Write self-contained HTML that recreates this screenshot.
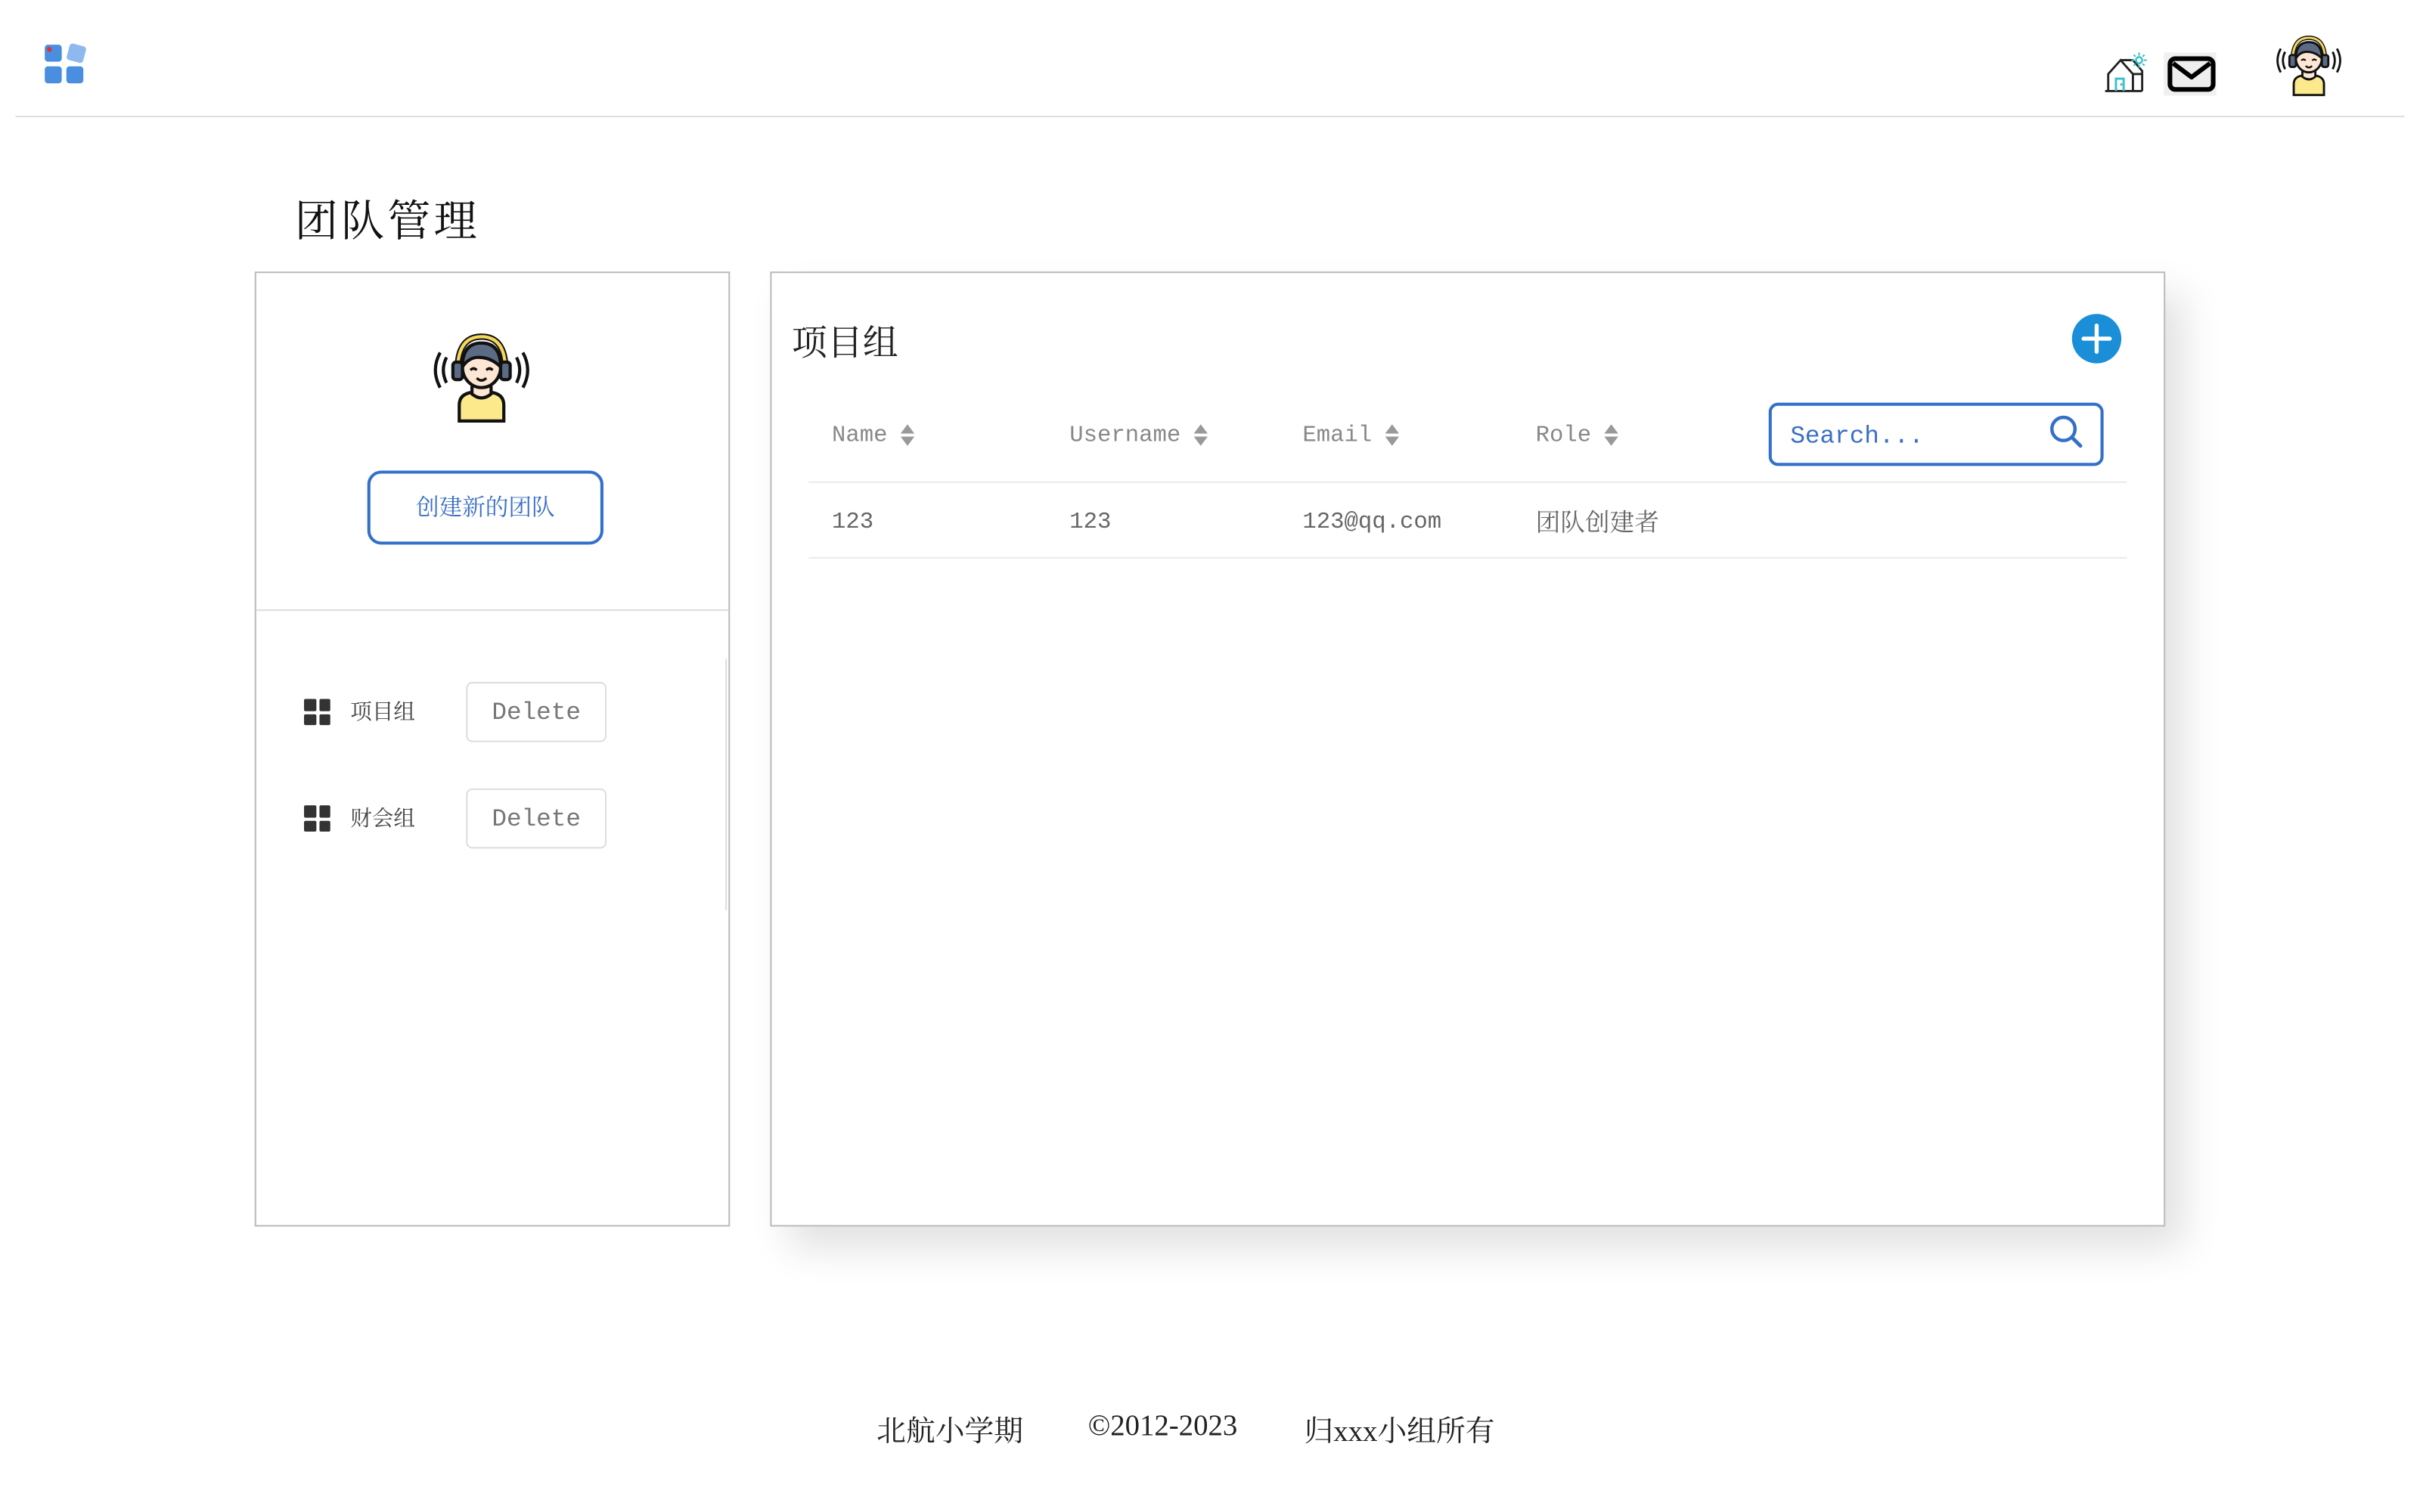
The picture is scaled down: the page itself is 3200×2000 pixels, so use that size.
<!DOCTYPE html>
<html><head><meta charset="utf-8"><style>
html,body{margin:0;padding:0;background:#fff;width:3200px;height:2000px;overflow:hidden}
#w{position:absolute;left:0;top:0;width:1568px;height:980px;transform:scale(2.0408);transform-origin:0 0;font-family:"Liberation Serif","Noto Serif CJK SC",serif;color:#333}
.a{position:absolute}
.mono{font-family:"Liberation Mono","Noto Serif CJK SC",monospace}
.th{position:absolute;top:274px;font-size:15px;color:#888;white-space:nowrap}
.td{position:absolute;top:330px;font-size:15px;color:#666;white-space:nowrap}
.sort{display:inline-block;vertical-align:middle;margin-left:8px;width:10px;height:16px}
.del{position:absolute;left:302px;width:89px;height:37px;border:1px solid #ddd;border-radius:4px;font-size:16px;color:#777;text-align:center;line-height:39px}
.grid{position:absolute;left:197px;width:17px;height:17px}
.grid i{position:absolute;width:7.5px;height:7.5px;background:#333;border-radius:1px}
.it{position:absolute;left:227px;font-size:14px;color:#444}
.ft{position:absolute;top:913px;font-size:19px;color:#222;white-space:nowrap}
</style></head><body><div id="w">
<svg width="0" height="0" style="position:absolute"><defs>
<symbol id="av" viewBox="0 0 64 60">
<path d="M18 58 v-10 q0-7 8-8 h12 q8 1 8 8 v10z" fill="#fbe98c" stroke="#111" stroke-width="2"/>
<path d="M26 36 v5 q6 5 12 0 v-5" fill="#fde7d4" stroke="#111" stroke-width="2"/>
<ellipse cx="32" cy="24" rx="12" ry="13" fill="#fde7d4" stroke="#111" stroke-width="2"/>
<path d="M20 24 q0-15 12-15 q12 0 12 15 q-6-6-14-6 q-6 0-10 6z" fill="#5c6b85" stroke="#111" stroke-width="2"/>
<path d="M17 26 q0-21 15-21 q15 0 15 21" fill="none" stroke="#111" stroke-width="4"/>
<path d="M17 26 q0-21 15-21 q15 0 15 21" fill="none" stroke="#f5d85a" stroke-width="2"/>
<rect x="14" y="21" width="6" height="11" rx="2" fill="#5c6b85" stroke="#111" stroke-width="2"/>
<rect x="44" y="21" width="6" height="11" rx="2" fill="#5c6b85" stroke="#111" stroke-width="2"/>
<path d="M25 26 q2-2 4 0 M35 26 q2-2 4 0 M29 31 q3 3 6 0" fill="none" stroke="#111" stroke-width="1.6"/>
<path d="M10 18 q-4 8 0 16 M6 15 q-6 11 0 22 M54 18 q4 8 0 16 M58 15 q6 11 0 22" fill="none" stroke="#111" stroke-width="2"/>
</symbol>
<symbol id="sa" viewBox="0 0 10 16"><path d="M5 1 L9.5 7 H0.5Z M5 15 L9.5 9 H0.5Z" fill="#999"/></symbol>
</defs></svg>

<svg class="a" style="left:28px;top:27px" width="30" height="30" viewBox="0 0 30 30">
<rect x="1" y="2" width="11" height="11" rx="2" fill="#4a8ee0"/><circle cx="4" cy="5" r="1.6" fill="#d33"/>
<rect x="16" y="2" width="11" height="11" rx="2" fill="#8db8f0" transform="rotate(15 21.5 7.5)"/>
<rect x="1" y="16" width="11" height="11" rx="2" fill="#4a8ee0"/>
<rect x="15" y="16" width="11" height="11" rx="2" fill="#4a8ee0"/>
</svg>
<div class="a" style="left:10px;top:75px;width:1548px;height:1px;background:#ddd"></div>
<svg class="a" style="left:1362px;top:33px" width="30" height="28" viewBox="0 0 30 28">
<path d="M2 26 H26 M4 26 V15 L12 6 L20 15 V26 M12 6 H20 L26 13 V26 M20 15 H26" fill="none" stroke="#222" stroke-width="1.4"/>
<path d="M9 26 V18 H14 V26 M12.5 21v1.5" fill="none" stroke="#3bbfc8" stroke-width="1.4"/>
<circle cx="24" cy="6" r="2" fill="none" stroke="#3bbfc8" stroke-width="1.2"/>
<path d="M24 1v2 M24 9v2 M19 6h2 M27 6h2 M20.5 2.5l1.2 1.2 M26.3 8.3l1.2 1.2 M27.5 2.5l-1.2 1.2 M21.7 8.3l-1.2 1.2" stroke="#3bbfc8" stroke-width="1"/>
</svg>
<div class="a" style="left:1402px;top:34px;width:34px;height:28px;background:#f0f0f0"></div>
<svg class="a" style="left:1404px;top:36px" width="32" height="24" viewBox="0 0 32 24">
<rect x="2" y="2" width="28" height="20" rx="3.5" fill="#eee" stroke="#000" stroke-width="3"/>
<path d="M4 5 L16 14 L28 5" fill="none" stroke="#000" stroke-width="3" stroke-linejoin="round"/>
</svg>
<svg class="a" style="left:1469px;top:21px" width="54" height="42"><use href="#av" width="54" height="42"/></svg>

<div class="a" style="left:191px;top:122px;font-size:28px;color:#111;font-family:'Noto Serif CJK SC',serif;letter-spacing:2px">团队管理</div>

<div class="a" style="left:165px;top:176px;width:306px;height:617px;border:1.5px solid #bbb"></div>
<svg class="a" style="left:279px;top:213px" width="66" height="62"><use href="#av" width="66" height="62"/></svg>
<div class="a" style="left:238px;top:305px;width:149px;height:44px;border:2px solid #3470c8;border-radius:9px;color:#3a6fc4;font-size:15px;text-align:center;line-height:44px;font-family:'Noto Serif CJK SC',serif">创建新的团队</div>
<div class="a" style="left:166px;top:395px;width:306px;height:1px;background:#ddd"></div>
<div class="a" style="left:470px;top:427px;width:1px;height:163px;background:#ddd"></div>
<div class="grid" style="top:453px"><i style="left:0;top:0"></i><i style="left:9.5px;top:0"></i><i style="left:0;top:9.5px"></i><i style="left:9.5px;top:9.5px"></i></div>
<div class="it" style="top:451px">项目组</div>
<div class="del mono" style="top:442px">Delete</div>
<div class="grid" style="top:522px"><i style="left:0;top:0"></i><i style="left:9.5px;top:0"></i><i style="left:0;top:9.5px"></i><i style="left:9.5px;top:9.5px"></i></div>
<div class="it" style="top:520px">财会组</div>
<div class="del mono" style="top:511px">Delete</div>

<div class="a" style="left:499px;top:176px;width:902px;height:617px;border:1.5px solid #bbb;box-shadow:12px 14px 24px rgba(0,0,0,0.12)"></div>
<div class="a" style="left:513px;top:204px;font-size:23px;color:#222;font-family:'Noto Serif CJK SC',serif">项目组</div>
<svg class="a" style="left:1342px;top:203px" width="33" height="33" viewBox="0 0 33 33"><circle cx="16.5" cy="16.5" r="16" fill="#1a8fd8"/><path d="M16.5 8v17 M8 16.5h17" stroke="#fff" stroke-width="2.6" stroke-linecap="round"/></svg>
<div class="th mono" style="left:539px">Name<svg class="sort"><use href="#sa" width="10" height="16"/></svg></div>
<div class="th mono" style="left:693px">Username<svg class="sort"><use href="#sa" width="10" height="16"/></svg></div>
<div class="th mono" style="left:844px">Email<svg class="sort"><use href="#sa" width="10" height="16"/></svg></div>
<div class="th mono" style="left:995px">Role<svg class="sort"><use href="#sa" width="10" height="16"/></svg></div>
<div class="a" style="left:1146px;top:261px;width:213px;height:37px;border:2px solid #3470c8;border-radius:6px"></div>
<div class="a mono" style="left:1160px;top:274px;font-size:16px;color:#3a6fc4">Search...</div>
<svg class="a" style="left:1327px;top:268px" width="24" height="24" viewBox="0 0 24 24"><circle cx="10" cy="10" r="7.5" fill="none" stroke="#3470c8" stroke-width="2.2"/><path d="M15.5 15.5 L21 21" stroke="#3470c8" stroke-width="2.4" stroke-linecap="round"/></svg>
<div class="a" style="left:524px;top:312px;width:854px;height:1px;background:#eaeaea"></div>
<div class="td mono" style="left:539px">123</div>
<div class="td mono" style="left:693px">123</div>
<div class="td mono" style="left:844px">123@qq.com</div>
<div class="td" style="left:995px;font-family:'Noto Serif CJK SC',serif;top:326px;font-size:16px">团队创建者</div>
<div class="a" style="left:524px;top:361px;width:854px;height:1px;background:#eaeaea"></div>

<div class="ft" style="left:568px">北航小学期</div>
<div class="ft" style="left:705px;top:914px">©2012-2023</div>
<div class="ft" style="left:845px">归xxx小组所有</div>
</div></body></html>
